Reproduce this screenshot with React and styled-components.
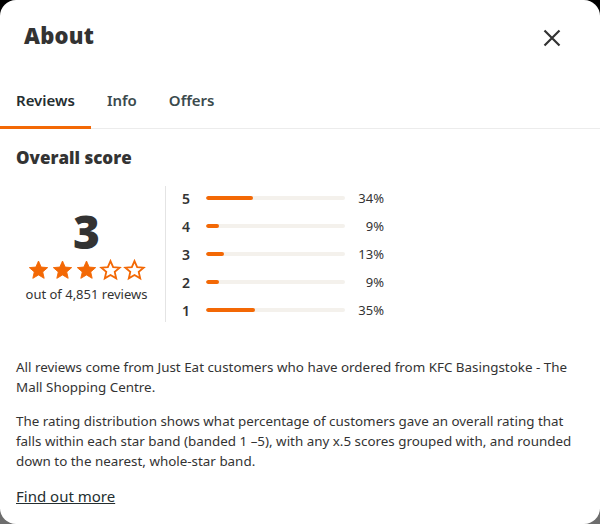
import React from 'react'
import styled, { createGlobalStyle } from 'styled-components'

const GlobalStyle = createGlobalStyle`
  html, body {
    margin: 0;
    padding: 0;
    height: 100%;
  }
  body {
    background: linear-gradient(180deg, #000 0%, #3a3a3a 50%, #6e6e6e 100%);
    font-family: "Noto Sans", "Open Sans", sans-serif;
    color: #242e30;
  }
`

const ratings = [
  { stars: 5, pct: 34 },
  { stars: 4, pct: 9 },
  { stars: 3, pct: 13 },
  { stars: 2, pct: 9 },
  { stars: 1, pct: 35 },
]

const Star = ({ filled }) => (
  <svg width="23" height="22" viewBox="0 0 24 24">
    <path
      d="M12 2.2l2.9 6.6 7.1.6-5.4 4.7 1.6 7-6.2-3.7-6.2 3.7 1.6-7L2 9.4l7.1-.6z"
      fill={filled ? '#f36805' : '#fff'}
      stroke="#f36805"
      strokeWidth={filled ? 1 : 2}
      strokeLinejoin="miter"
    />
  </svg>
)

const CloseIcon = () => (
  <svg width="18" height="18" viewBox="0 0 18 18">
    <path d="M1.5 1.5L16.5 16.5M16.5 1.5L1.5 16.5" stroke="#333" strokeWidth="2.2" />
  </svg>
)

export default function App() {
  return (
    <>
      <GlobalStyle />
      <Modal>
        <Header>
          <Title>About</Title>
          <CloseButton aria-label="Close">
            <CloseIcon />
          </CloseButton>
        </Header>
        <Tabs>
          <Tab active>Reviews</Tab>
          <Tab>Info</Tab>
          <Tab>Offers</Tab>
        </Tabs>
        <Body>
          <SectionTitle>Overall score</SectionTitle>
          <ScoreArea>
            <Summary>
              <BigScore>3</BigScore>
              <Stars>
                {[1, 2, 3, 4, 5].map(i => (
                  <Star key={i} filled={i <= 3} />
                ))}
              </Stars>
              <Count>out of 4,851 reviews</Count>
            </Summary>
            <Distribution>
              {ratings.map(r => (
                <Row key={r.stars}>
                  <RowLabel>{r.stars}</RowLabel>
                  <Track>
                    <Fill style={{ width: `${r.pct}%` }} />
                  </Track>
                  <Pct>{r.pct}%</Pct>
                </Row>
              ))}
            </Distribution>
          </ScoreArea>
          <Text>
            All reviews come from Just Eat customers who have ordered from KFC
            Basingstoke - The Mall Shopping Centre.
          </Text>
          <Text>
            The rating distribution shows what percentage of customers gave an
            overall rating that falls within each star band (banded 1 –5), with
            any x.5 scores grouped with, and rounded down to the nearest,
            whole-star band.
          </Text>
          <MoreLink href="#">Find out more</MoreLink>
        </Body>
      </Modal>
    </>
  )
}

const Modal = styled.div`
  width: 600px;
  height: 524px;
  background: #fff;
  border-radius: 16px;
  overflow: hidden;
  box-sizing: border-box;
`

const Header = styled.div`
  display: flex;
  align-items: center;
  justify-content: space-between;
  height: 74px;
  padding: 0 39px 4px 24px;
  box-sizing: border-box;
`

const Title = styled.h1`
  margin: 0;
  font-family: "Open Sans", sans-serif;
  font-weight: 800;
  font-size: 22px;
  letter-spacing: 0.2px;
  color: #333;
`

const CloseButton = styled.button`
  border: 0;
  background: none;
  padding: 0;
  margin-top: 6px;
  display: flex;
  cursor: pointer;
`

const Tabs = styled.div`
  display: flex;
  border-bottom: 1px solid #ececec;
  height: 54px;
`

const Tab = styled.div`
  display: flex;
  align-items: center;
  padding: 0 16px;
  font-size: 15px;
  font-weight: 600;
  color: ${p => (p.active ? '#242e30' : '#3b4a4d')};
  border-bottom: 3px solid ${p => (p.active ? '#f36805' : 'transparent')};
  margin-bottom: -1px;
`

const Body = styled.div`
  padding: 0 16px;
`

const SectionTitle = styled.h2`
  margin: 18px 0 0;
  font-family: "Open Sans", sans-serif;
  font-weight: 800;
  font-size: 17px;
  color: #333;
  line-height: 22px;
`

const ScoreArea = styled.div`
  display: flex;
  margin-top: 17px;
  margin-bottom: 35px;
`

const Summary = styled.div`
  width: 150px;
  padding-right: 8px;
  box-sizing: border-box;
  display: flex;
  flex-direction: column;
  align-items: center;
  justify-content: center;
  border-right: 1px solid #e4e4e4;
`

const BigScore = styled.div`
  font-family: "Open Sans", sans-serif;
  font-weight: 800;
  font-size: 46px;
  line-height: 48px;
  color: #333;
  margin-top: 2px;
`

const Stars = styled.div`
  display: flex;
  margin-top: 4px;
  gap: 1px;
`

const Count = styled.div`
  font-size: 13px;
  color: #333;
  margin-top: 4px;
`

const Distribution = styled.div`
  display: flex;
  flex-direction: column;
  gap: 8px;
  padding: 2px 0 2px 16px;
`

const Row = styled.div`
  display: flex;
  align-items: center;
  height: 20px;
`

const RowLabel = styled.span`
  width: 24px;
  font-size: 14px;
  font-weight: 600;
  color: #333;
`

const Track = styled.div`
  width: 139px;
  height: 4px;
  border-radius: 2px;
  background: #f4f1ec;
  overflow: hidden;
`

const Fill = styled.div`
  height: 100%;
  border-radius: 2px;
  background: #f36805;
`

const Pct = styled.span`
  width: 39px;
  text-align: right;
  font-size: 13px;
  color: #333;
`

const Text = styled.p`
  margin: 0 0 14px;
  font-size: 13.4px;
  line-height: 20px;
  color: #333;
`

const MoreLink = styled.a`
  display: inline-block;
  margin-top: 1px;
  font-size: 15px;
  color: #242e30;
  text-decoration: underline;
`
